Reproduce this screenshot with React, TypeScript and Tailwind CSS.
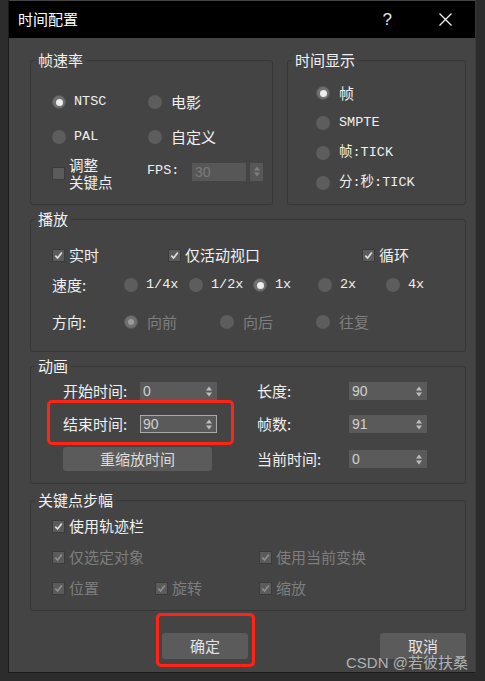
import React from "react";

const cjk = "font-['Noto_Sans_CJK_SC','Noto_Sans',sans-serif]";
const mono = "font-['Liberation_Mono','Noto_Sans_CJK_SC',monospace]";

function Radio({ on = false, dim = false }: { on?: boolean; dim?: boolean }) {
    return (
        <span
            className={
                on
                    ? "w-[14px] h-[14px] rounded-full bg-[#707070] border border-[#585858] flex items-center justify-center shrink-0"
                    : "w-[14px] h-[14px] rounded-full bg-[#5d5d5d] shrink-0"
            }
        >
            {on && (
                <span className={dim ? "w-[6px] h-[6px] rounded-full bg-[#9c9c9c]" : "w-[7px] h-[7px] rounded-full bg-[#ededed]"} />
            )}
        </span>
    );
}

function Check({ on = true, dim = false }: { on?: boolean; dim?: boolean }) {
    return (
        <span className="w-[13px] h-[13px] bg-[#5b5b5b] border border-[#3b3b3b] flex items-center justify-center shrink-0">
            {on && (
                <svg width="9" height="9" viewBox="0 0 9 9">
                    <path d="M1.3 4.6 L3.6 7 L7.8 1.6" fill="none" stroke={dim ? "#8e8e8e" : "#dedede"} strokeWidth="1.7" />
                </svg>
            )}
        </span>
    );
}

function Arrows({ color = "#bdbdbd" }: { color?: string }) {
    return (
        <svg width="6" height="11" viewBox="0 0 6 11">
            <path d="M0 4.5 L3 0.5 L6 4.5Z" fill={color} />
            <path d="M0 6.5 L3 10.5 L6 6.5Z" fill={color} />
        </svg>
    );
}

function Spin({ value, w, focused = false }: { value: string; w: string; focused?: boolean }) {
    return (
        <div
            className={`${w} h-[18px] bg-[#5a5a5a] flex items-center justify-between pl-[2px] pr-[4px] border ${
                focused ? "border-[#a9a9a9]" : "border-transparent"
            }`}
        >
            <span className="font-['Liberation_Sans',sans-serif] text-[14px] leading-none text-[#d0d0d0]">{value}</span>
            <Arrows />
        </div>
    );
}

function Group({ title, className, children }: { title: string; className: string; children: React.ReactNode }) {
    return (
        <fieldset className={`border border-[#363636] rounded-[3px] m-0 p-0 min-w-0 ${className}`}>
            <legend className="ml-[4px] px-[3px] text-[15px] leading-[20px] text-[#f2f2f2]">{title}</legend>
            {children}
        </fieldset>
    );
}

function Item({ children, dim = false, latin = false }: { children: React.ReactNode; dim?: boolean; latin?: boolean }) {
    return (
        <span
            className={`${latin ? mono + " text-[13.5px]" : "text-[15px]"} leading-[20px] ${
                dim ? "text-[#7e7e7e]" : "text-[#f0f0f0]"
            } whitespace-nowrap`}
        >
            {children}
        </span>
    );
}

export default function App() {
    return (
        <div className={`relative w-[485px] h-[681px] bg-[#2c2c2c] overflow-hidden ${cjk}`}>
            <div className="ml-[8px] w-[468px] h-[673px] bg-[#444444] border-l border-b border-[#1b1b1b] border-r-[#3a3a3a] border-r flex flex-col">
                {/* Title bar */}
                <div className="mt-[1px] h-[37px] bg-black flex items-center pl-[9px] pr-[23px]">
                    <span className="text-[15px] text-white">时间配置</span>
                    <span className="ml-auto font-['Liberation_Sans',sans-serif] text-[17px] text-[#e6e6e6]">?</span>
                    <svg className="ml-[47px]" width="13" height="13" viewBox="0 0 13 13">
                        <path d="M0.5 0.5 L12.5 12.5 M12.5 0.5 L0.5 12.5" stroke="#f2f2f2" strokeWidth="1.3" />
                    </svg>
                </div>

                <div className="pl-[21px] pr-[9px] pt-[12px] flex flex-col">
                    {/* Row 1 */}
                    <div className="flex gap-[14px]">
                        <Group title="帧速率" className="w-[243px] h-[155px]">
                            <div className="pl-[21px] pt-[22px] flex flex-col">
                                <div className="flex h-[20px] items-center">
                                    <div className="w-[96px] flex items-center gap-[8px]">
                                        <Radio on />
                                        <Item latin>NTSC</Item>
                                    </div>
                                    <div className="flex items-center gap-[9px]">
                                        <Radio />
                                        <Item>电影</Item>
                                    </div>
                                </div>
                                <div className="flex h-[20px] items-center mt-[15px]">
                                    <div className="w-[96px] flex items-center gap-[8px]">
                                        <Radio />
                                        <Item latin>PAL</Item>
                                    </div>
                                    <div className="flex items-center gap-[9px]">
                                        <Radio />
                                        <Item>自定义</Item>
                                    </div>
                                </div>
                                <div className="flex items-center mt-[10px]">
                                    <div className="w-[95px] flex items-center gap-[4px]">
                                        <Check on={false} />
                                        <div className="flex flex-col text-[14.5px] text-[#f0f0f0]">
                                            <span className="h-[16px] leading-[16px]">调整</span>
                                            <span className="h-[16px] leading-[16px] mt-[1px]">关键点</span>
                                        </div>
                                    </div>
                                    <span className={`${mono} text-[13.5px] text-[#f0f0f0] w-[45px] -mt-[4px]`}>FPS:</span>
                                    <div className="flex items-center gap-[4px] -mt-[4px]">
                                        <div className="w-[54px] h-[18px] bg-[#575757] flex items-center pl-[3px]">
                                            <span className="font-['Liberation_Sans',sans-serif] text-[14px] leading-none text-[#7a7a7a]">30</span>
                                        </div>
                                        <div className="w-[13px] h-[18px] bg-[#575757] flex items-center justify-center">
                                            <Arrows color="#7e7e7e" />
                                        </div>
                                    </div>
                                </div>
                            </div>
                        </Group>
                        <Group title="时间显示" className="flex-1 h-[155px]">
                            <div className="pl-[28px] pt-[13px] flex flex-col gap-[10px]">
                                {[
                                    ["帧", true],
                                    ["SMPTE", false],
                                    ["帧:TICK", false],
                                    ["分:秒:TICK", false],
                                ].map(([label, on]) => (
                                    <div key={label as string} className="flex h-[20px] items-center gap-[9px]">
                                        <Radio on={on as boolean} />
                                        <Item latin={label !== "帧"}>{label as string}</Item>
                                    </div>
                                ))}
                            </div>
                        </Group>
                    </div>

                    {/* Playback */}
                    <Group title="播放" className="mt-[4px] h-[143px]">
                        <div className="pl-[21px] pt-[16px] flex flex-col">
                            <div className="flex h-[20px] items-center">
                                <div className="w-[116px] flex items-center gap-[4px]">
                                    <Check />
                                    <Item>实时</Item>
                                </div>
                                <div className="w-[194px] flex items-center gap-[4px]">
                                    <Check />
                                    <Item>仅活动视口</Item>
                                </div>
                                <div className="flex items-center gap-[4px]">
                                    <Check />
                                    <Item>循环</Item>
                                </div>
                            </div>
                            <div className="flex h-[20px] items-center mt-[10px]">
                                <span className="w-[72px] text-[15px] text-[#f0f0f0]">速度:</span>
                                {[
                                    ["1/4x", "w-[65px]", false],
                                    ["1/2x", "w-[64px]", false],
                                    ["1x", "w-[65px]", true],
                                    ["2x", "w-[68px]", false],
                                    ["4x", "w-[50px]", false],
                                ].map(([label, w, on]) => (
                                    <div key={label as string} className={`${w} flex items-center gap-[8px]`}>
                                        <Radio on={on as boolean} />
                                        <Item latin>{label as string}</Item>
                                    </div>
                                ))}
                            </div>
                            <div className="flex h-[20px] items-center mt-[17px]">
                                <span className="w-[72px] text-[15px] text-[#f0f0f0]">方向:</span>
                                {[
                                    ["向前", true],
                                    ["向后", false],
                                    ["往复", false],
                                ].map(([label, on]) => (
                                    <div key={label as string} className="w-[96px] flex items-center gap-[9px]">
                                        <Radio on={on as boolean} dim />
                                        <Item dim>{label as string}</Item>
                                    </div>
                                ))}
                            </div>
                        </div>
                    </Group>

                    {/* Animation */}
                    <Group title="动画" className="mt-[4px] h-[128px]">
                        <div className="pl-[32px] pt-[5px] flex">
                            <div className="w-[194px] flex flex-col">
                                <div className="flex h-[20px] items-center">
                                    <span className="w-[77px] text-[15px] text-[#f0f0f0]">开始时间:</span>
                                    <Spin value="0" w="w-[77px]" />
                                </div>
                                <div className="flex h-[20px] items-center mt-[13px]">
                                    <span className="w-[77px] text-[15px] text-[#f0f0f0]">结束时间:</span>
                                    <Spin value="90" w="w-[77px]" focused />
                                </div>
                                <div className="mt-[13px] w-[149px] h-[24px] bg-[#5b5b5b] rounded-[3px] flex items-center justify-center text-[15px] text-[#dcdcdc]">
                                    重缩放时间
                                </div>
                            </div>
                            <div className="flex flex-col">
                                <div className="flex h-[20px] items-center">
                                    <span className="w-[92px] text-[15px] text-[#f0f0f0]">长度:</span>
                                    <Spin value="90" w="w-[78px]" />
                                </div>
                                <div className="flex h-[20px] items-center mt-[13px]">
                                    <span className="w-[92px] text-[15px] text-[#f0f0f0]">帧数:</span>
                                    <Spin value="91" w="w-[78px]" />
                                </div>
                                <div className="flex h-[24px] items-center mt-[13px]">
                                    <span className="w-[92px] text-[15px] text-[#f0f0f0]">当前时间:</span>
                                    <Spin value="0" w="w-[78px]" />
                                </div>
                            </div>
                        </div>
                    </Group>

                    {/* Key steps */}
                    <Group title="关键点步幅" className="mt-[6px] h-[121px]">
                        <div className="pl-[21px] pt-[6px] flex flex-col">
                            <div className="flex h-[20px] items-center gap-[4px]">
                                <Check />
                                <Item>使用轨迹栏</Item>
                            </div>
                            <div className="flex h-[20px] items-center mt-[11px]">
                                <div className="w-[207px] flex items-center gap-[4px]">
                                    <Check dim />
                                    <Item dim>仅选定对象</Item>
                                </div>
                                <div className="flex items-center gap-[4px]">
                                    <Check dim />
                                    <Item dim>使用当前变换</Item>
                                </div>
                            </div>
                            <div className="flex h-[20px] items-center mt-[11px]">
                                <div className="w-[103px] flex items-center gap-[4px]">
                                    <Check dim />
                                    <Item dim>位置</Item>
                                </div>
                                <div className="w-[104px] flex items-center gap-[4px]">
                                    <Check dim />
                                    <Item dim>旋转</Item>
                                </div>
                                <div className="flex items-center gap-[4px]">
                                    <Check dim />
                                    <Item dim>缩放</Item>
                                </div>
                            </div>
                        </div>
                    </Group>

                    {/* Buttons */}
                    <div className="mt-[22px] flex justify-between pl-[132px]">
                        <div className="w-[86px] h-[26px] bg-[#5b5b5b] rounded-[3px] flex items-center justify-center text-[15px] leading-[18px] text-[#e4e4e4]">
                            确定
                        </div>
                        <div className="w-[86px] h-[26px] bg-[#5b5b5b] rounded-[3px] flex items-center justify-center text-[15px] leading-[18px] text-[#e4e4e4]">
                            取消
                        </div>
                    </div>
                </div>
            </div>

            {/* Annotations */}
            <div className="absolute left-[47px] top-[400px] w-[187px] h-[45px] border-[3px] border-[#ff2416] rounded-[5px]" />
            <div className="absolute left-[156px] top-[613px] w-[99px] h-[54px] border-[3px] border-[#ff2416] rounded-[5px]" />
            <span className="absolute left-[346px] top-[655px] text-[15px] leading-[16px] text-[#cfcfcf]/80 font-['Liberation_Sans','Noto_Sans_CJK_SC',sans-serif]">
                CSDN @若彼扶桑
            </span>
        </div>
    );
}
